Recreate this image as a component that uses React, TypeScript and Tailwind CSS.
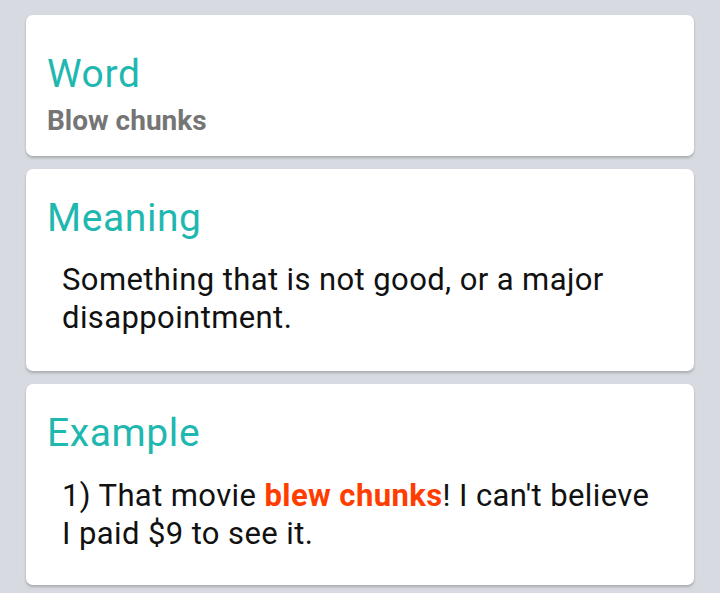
import React from "react";

function Card({ className, children }: { className?: string; children: React.ReactNode }) {
  return (
    <div
      className={
        "mx-[26px] rounded-[7px] bg-white px-[21px] shadow-[0_2px_3px_rgba(0,0,0,0.22)] " +
        (className || "")
      }
    >
      {children}
    </div>
  );
}

function Heading({ children }: { children: React.ReactNode }) {
  return (
    <h2 className="text-[39px] leading-[45.7px] tracking-[0.6px] text-[#1fb8b0]">{children}</h2>
  );
}

export default function App() {
  return (
    <div
      className="min-h-[593px] bg-[#d7dae0] pt-[15px] pb-[9px] flex flex-col gap-[13px]"
      style={{ fontFamily: "Roboto, 'Noto Sans', sans-serif" }}
    >
      <Card className="pt-[37px] pb-[19px]">
        <Heading>Word</Heading>
        <p className="mt-[6px] text-[28px] leading-[33px] font-bold text-[#757575]">
          Blow chunks
        </p>
      </Card>
      <Card className="pt-[27px] pb-[34px]">
        <Heading>Meaning</Heading>
        <p className="mt-[20px] pl-[15px] pr-[10px] text-[31px] leading-[38px] tracking-[0.4px] text-[#111]">
          Something that is not good, or a major disappointment.
        </p>
      </Card>
      <Card className="pt-[27px] pb-[32px]">
        <Heading>Example</Heading>
        <p className="mt-[20px] pl-[15px] pr-[10px] text-[31px] leading-[38px] tracking-[0.4px] text-[#111]">
          1) That movie <span className="font-bold text-[#ff3d00]">blew chunks</span>! I can't
          believe I paid $9 to see it.
        </p>
      </Card>
    </div>
  );
}
